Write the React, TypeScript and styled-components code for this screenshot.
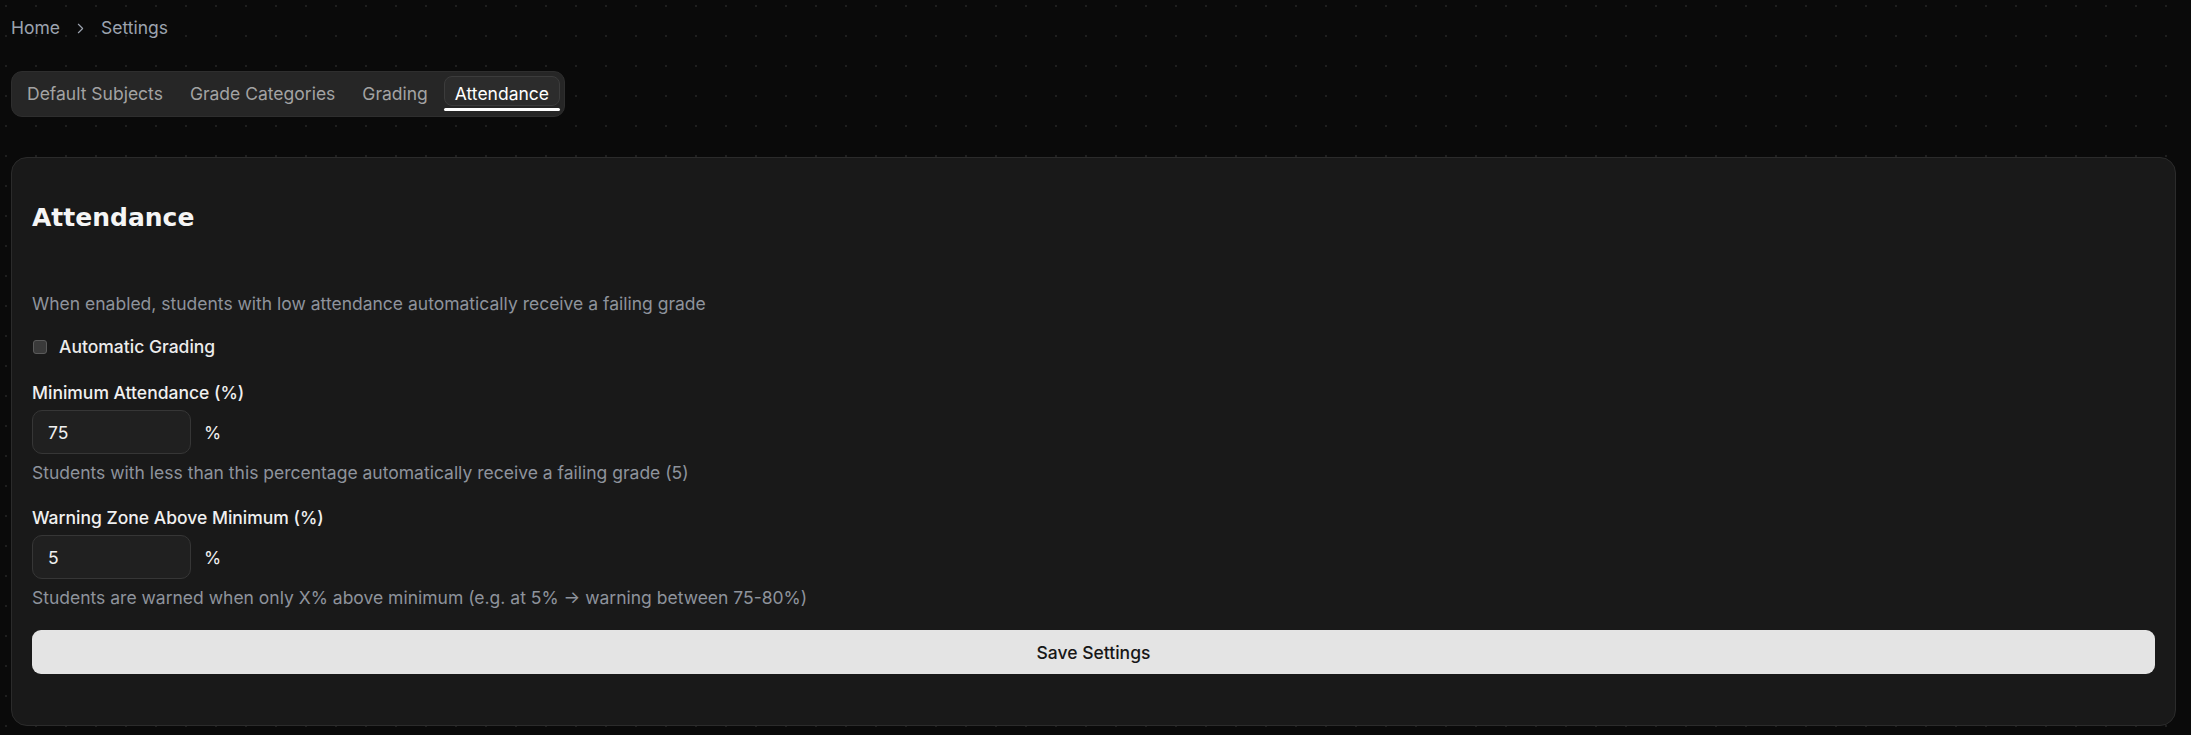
import React, { useState } from "react";
import styled, { createGlobalStyle } from "styled-components";
import { ChevronRight } from "lucide-react";

const GlobalStyle = createGlobalStyle`
  html, body { margin: 0; padding: 0; }
  body {
    min-height: 100vh;
    background-color: #0a0a0a;
    background-image: radial-gradient(circle, #1f1f1f 1px, transparent 1.3px);
    background-size: 30px 30px;
    background-position: -9px -9px;
    font-family: Inter, "Liberation Sans", sans-serif;
    color: #e5e5e5;
  }
  * { box-sizing: border-box; }
`;

const Page = styled.div`
  padding: 15px 15px 11px 11px;
  display: flex;
  flex-direction: column;
`;

const Breadcrumb = styled.nav`
  display: flex;
  align-items: center;
  gap: 12px;
  height: 26px;
  font-size: 17.5px;
  line-height: 26px;
  color: #9ca3af;
`;

const Crumb = styled.span``;

const TabList = styled.div`
  margin-top: 30px;
  align-self: flex-start;
  display: flex;
  gap: 5px;
  padding: 4px 4px 10px 4px;
  background: #262626;
  border: 1px solid #2e2e2e;
  border-radius: 11px;
`;

const Tab = styled.button<{ $active?: boolean }>`
  position: relative;
  height: 30px;
  padding: 5px 10px 0 10px;
  border-radius: 8px;
  border: 1px solid ${(p) => (p.$active ? "#3c3c3c" : "transparent")};
  background: ${(p) => (p.$active ? "#2c2c2c" : "transparent")};
  color: ${(p) => (p.$active ? "#ffffff" : "#a3a3a3")};
  font-family: Inter, "Liberation Sans", sans-serif;
  font-size: 17.5px;
  font-weight: 400;
  line-height: 23px;
  cursor: pointer;
  &::after {
    content: "";
    display: ${(p) => (p.$active ? "block" : "none")};
    position: absolute;
    left: -1px;
    right: -1px;
    bottom: -6px;
    height: 3px;
    border-radius: 2px;
    background: #ffffff;
  }
`;

const Card = styled.section`
  margin-top: 40px;
  background: #191919;
  border: 1px solid #2b2b2b;
  border-radius: 16px;
  padding: 44px 20px 51px 20px;
  display: flex;
  flex-direction: column;
`;

const Title = styled.h2`
  margin: 0;
  font-family: "DejaVu Sans", Verdana, sans-serif;
  font-size: 25px;
  font-weight: 700;
  line-height: 32px;
  color: #f5f5f5;
`;

const Description = styled.p<{ $top: number }>`
  margin: ${(p) => p.$top}px 0 0 0;
  font-size: 17.5px;
  line-height: 25px;
  color: #8e939c;
`;

const CheckRow = styled.label`
  margin-top: 18px;
  display: flex;
  align-items: center;
  gap: 12px;
  height: 25px;
  font-size: 17.5px;
  font-weight: 500;
  color: #ececec;
  cursor: pointer;
`;

const Box = styled.span`
  width: 14px;
  height: 14px;
  margin-left: 1px;
  border-radius: 3px;
  background: #3a3a3a;
  border: 1px solid #5a5a5a;
`;

const FieldLabel = styled.div<{ $top: number }>`
  margin-top: ${(p) => p.$top}px;
  font-size: 17.5px;
  line-height: 25px;
  font-weight: 500;
  color: #f0f0f0;
`;

const InputRow = styled.div`
  margin-top: 5px;
  display: flex;
  align-items: center;
  gap: 13px;
`;

const NumberInput = styled.input`
  width: 159px;
  height: 44px;
  padding: 0 15px;
  background: #202020;
  border: 1px solid #363636;
  border-radius: 10px;
  color: #f0f0f0;
  font-family: Inter, "Liberation Sans", sans-serif;
  font-size: 17.5px;
  outline: none;
`;

const Unit = styled.span`
  font-size: 17.5px;
  color: #f0f0f0;
`;

const Help = styled.p`
  margin: 6px 0 0 0;
  font-size: 17.5px;
  line-height: 25px;
  color: #8e939c;
`;

const SaveButton = styled.button`
  margin-top: 20px;
  height: 44px;
  width: 100%;
  border: none;
  border-radius: 9px;
  background: #e4e4e4;
  color: #171717;
  font-family: Inter, "Liberation Sans", sans-serif;
  font-size: 17.5px;
  font-weight: 500;
  cursor: pointer;
`;

const tabs = ["Default Subjects", "Grade Categories", "Grading", "Attendance"];

export default function App() {
  const [active, setActive] = useState("Attendance");
  const [minAtt, setMinAtt] = useState("75");
  const [warn, setWarn] = useState("5");
  return (
    <>
      <GlobalStyle />
      <Page>
        <Breadcrumb>
          <Crumb>Home</Crumb>
          <ChevronRight size={17} strokeWidth={1.6} />
          <Crumb>Settings</Crumb>
        </Breadcrumb>
        <TabList>
          {tabs.map((t) => (
            <Tab key={t} $active={t === active} onClick={() => setActive(t)}>
              {t}
            </Tab>
          ))}
        </TabList>
        <Card>
          <Title>Attendance</Title>
          <Description $top={57}>
            When enabled, students with low attendance automatically receive a failing grade
          </Description>
          <CheckRow>
            <Box />
            Automatic Grading
          </CheckRow>
          <FieldLabel $top={21}>Minimum Attendance (%)</FieldLabel>
          <InputRow>
            <NumberInput value={minAtt} onChange={(e) => setMinAtt(e.target.value)} />
            <Unit>%</Unit>
          </InputRow>
          <Help>Students with less than this percentage automatically receive a failing grade (5)</Help>
          <FieldLabel $top={20}>Warning Zone Above Minimum (%)</FieldLabel>
          <InputRow>
            <NumberInput value={warn} onChange={(e) => setWarn(e.target.value)} />
            <Unit>%</Unit>
          </InputRow>
          <Help>Students are warned when only X% above minimum (e.g. at 5% → warning between 75-80%)</Help>
          <SaveButton>Save Settings</SaveButton>
        </Card>
      </Page>
    </>
  );
}
